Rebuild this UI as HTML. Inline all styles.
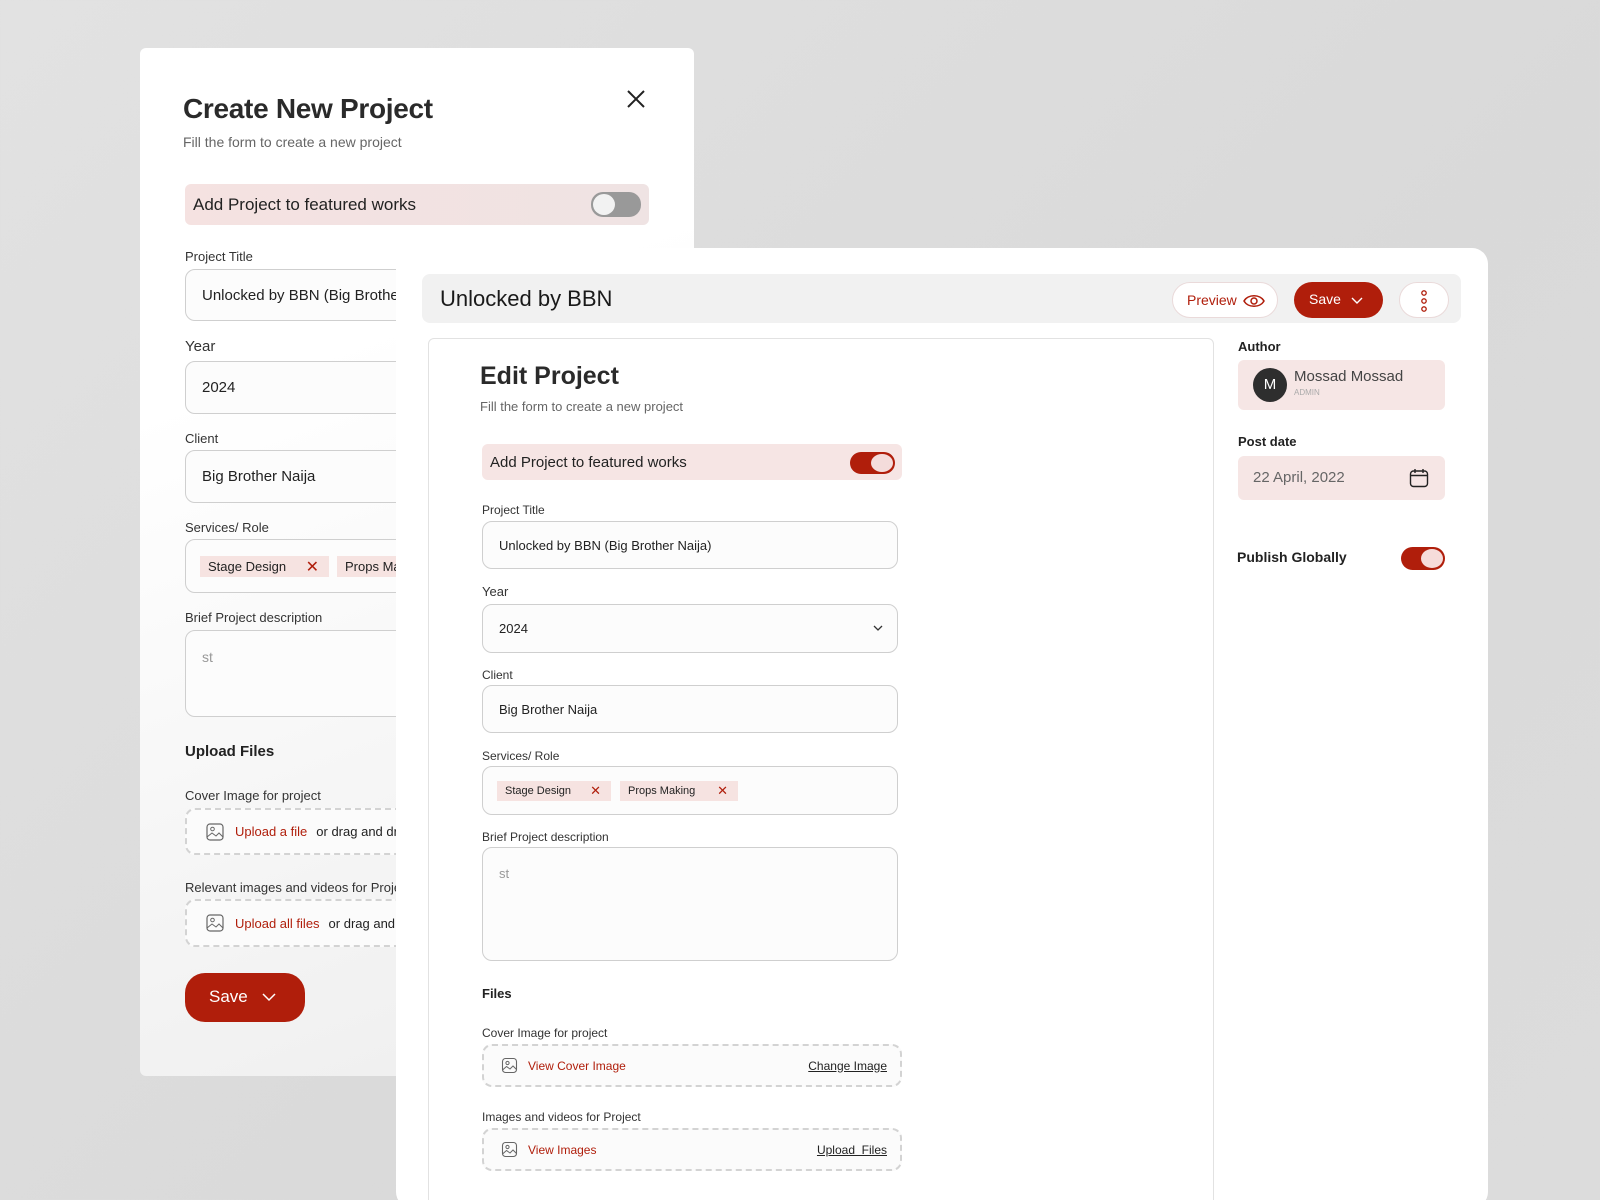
<!DOCTYPE html>
<html style="width:1600px;height:1200px;overflow:hidden"><head><meta charset="utf-8"><style>
*{box-sizing:border-box;margin:0;padding:0}
body{width:1600px;height:1200px;overflow:hidden;background:linear-gradient(135deg,#e2e2e2,#d9d9d9 60%,#dcdcdc);font-family:"Liberation Sans",sans-serif;color:#222;position:relative}
.a{position:absolute;white-space:nowrap}
.back{left:140px;top:48px;width:554px;height:1028px;border-radius:6px;background:linear-gradient(160deg,#fff 30%,#f5f5f5 70%,#eeeeee)}
.lbl{font-size:13px;color:#333}
.inp{border:1px solid #cfcfcf;border-radius:10px;background:#fcfcfc;font-size:14px;color:#222;padding-left:16px;display:flex;align-items:center;overflow:hidden}
.chip{background:#f6e3e1;font-size:12px;color:#222;display:flex;align-items:center;padding-left:8px}
.x{color:#b01e0b;font-size:16px;margin-left:auto;margin-right:10px}
.dash{border:2px dashed #d3d3d3;border-radius:10px;background:#fbfbfb;display:flex;align-items:center;font-size:12px;overflow:hidden}
.red{color:#b01e0b}
.front{left:396px;top:248px;width:1092px;height:960px;border-radius:16px;background:#fff}
.tog{border-radius:12px}
</style></head><body>
<div class="a back"></div>
<div class="a" style="left:183px;top:93px;font-size:28px;font-weight:bold;color:#2a2a2a;letter-spacing:-0.3px">Create New Project</div>
<div class="a" style="left:183px;top:134px;font-size:14px;color:#666">Fill the form to create a new project</div>
<svg class="a" style="left:626px;top:89px" width="20" height="20"><path d="M2 2L18 18M18 2L2 18" stroke="#222" stroke-width="2"/></svg>
<div class="a" style="left:185px;top:184px;width:464px;height:41px;border-radius:6px;background:linear-gradient(90deg,#f5e2e1,#efe3e3);font-size:17px;padding:11px 0 0 8px;color:#222">Add Project to featured works</div>
<div class="a tog" style="left:591px;top:192px;width:50px;height:25px;background:#999"></div>
<div class="a" style="left:593px;top:194px;width:22px;height:21px;border-radius:50%;background:#f2f2f2"></div>
<div class="a lbl" style="left:185px;top:249px">Project Title</div>
<div class="a inp" style="left:185px;top:269px;width:240px;height:52px;font-size:15px">Unlocked by BBN (Big Brother Naija)</div>
<div class="a lbl" style="left:185px;top:338px;font-size:15px">Year</div>
<div class="a inp" style="left:185px;top:361px;width:240px;height:53px;font-size:15px">2024</div>
<div class="a lbl" style="left:185px;top:431px">Client</div>
<div class="a inp" style="left:185px;top:450px;width:240px;height:53px;font-size:15px">Big Brother Naija</div>
<div class="a lbl" style="left:185px;top:520px">Services/ Role</div>
<div class="a inp" style="left:185px;top:539px;width:240px;height:54px"></div>
<div class="a chip" style="left:200px;top:556px;width:129px;height:21px;font-size:13px">Stage Design<span class="x">✕</span></div>
<div class="a chip" style="left:337px;top:556px;width:110px;height:21px;font-size:13px">Props Making</div>
<div class="a lbl" style="left:185px;top:610px">Brief Project description</div>
<div class="a inp" style="left:185px;top:630px;width:240px;height:87px;align-items:flex-start;padding-top:18px;color:#999">st</div>
<div class="a" style="left:185px;top:743px;font-size:15px;font-weight:bold">Upload Files</div>
<div class="a lbl" style="left:185px;top:788px">Cover Image for project</div>
<div class="a dash" style="left:185px;top:808px;width:260px;height:47px;padding-left:18px;font-size:13px"><svg width="20" height="20"><rect x="2" y="2" width="16" height="16" rx="3" fill="none" stroke="#666" stroke-width="1.2"/><circle cx="7.5" cy="7" r="1.8" fill="none" stroke="#666"/><path d="M2 15l5-4 4 3 3-3 4 4" fill="none" stroke="#666"/></svg><span class="red" style="margin-left:10px">Upload a file</span><span style="margin-left:9px">or drag and drop</span></div>
<div class="a lbl" style="left:185px;top:880px">Relevant images and videos for Project</div>
<div class="a dash" style="left:185px;top:899px;width:260px;height:48px;padding-left:18px;font-size:13px"><svg width="20" height="20"><rect x="2" y="2" width="16" height="16" rx="3" fill="none" stroke="#666" stroke-width="1.2"/><circle cx="7.5" cy="7" r="1.8" fill="none" stroke="#666"/><path d="M2 15l5-4 4 3 3-3 4 4" fill="none" stroke="#666"/></svg><span class="red" style="margin-left:10px">Upload all files</span><span style="margin-left:9px">or drag and drop</span></div>
<div class="a" style="left:185px;top:973px;width:120px;height:49px;border-radius:20px;background:#b01e0b;color:#fff;font-size:17px;padding:14px 0 0 24px">Save <svg style="margin-left:10px" width="14" height="10"><path d="M1 2l6 6 6-6" fill="none" stroke="#fff" stroke-width="1.5"/></svg></div>

<div class="a front"></div>
<div class="a" style="left:422px;top:274px;width:1039px;height:49px;border-radius:8px;background:#f1f1f1"></div>
<div class="a" style="left:440px;top:286px;font-size:22px;color:#1a1a1a">Unlocked by BBN</div>
<div class="a" style="left:1172px;top:282px;width:106px;height:36px;border-radius:18px;background:#fff;border:1px solid #eadada;color:#b01e0b;font-size:14px;padding:9px 0 0 14px">Preview<svg style="position:absolute;left:70px;top:9px" width="22" height="18"><path d="M1 9C5 2 17 2 21 9C17 16 5 16 1 9Z" fill="none" stroke="#b01e0b" stroke-width="1.5"/><circle cx="11" cy="9" r="3" fill="none" stroke="#b01e0b" stroke-width="1.5"/></svg></div>
<div class="a" style="left:1294px;top:282px;width:89px;height:36px;border-radius:18px;background:#b01e0b;color:#fff;font-size:14px;padding:9px 0 0 15px">Save<svg style="position:absolute;left:57px;top:14px" width="12" height="9"><path d="M1 2l5 5 5-5" fill="none" stroke="#fff" stroke-width="1.4"/></svg></div>
<div class="a" style="left:1399px;top:282px;width:50px;height:36px;border-radius:18px;background:#fff;border:1px solid #eadada"></div>
<svg class="a" style="left:1418px;top:289px" width="12" height="24"><circle cx="6" cy="4" r="2.2" fill="none" stroke="#b01e0b" stroke-width="1.3"/><circle cx="6" cy="12" r="2.2" fill="none" stroke="#b01e0b" stroke-width="1.3"/><circle cx="6" cy="20" r="2.2" fill="none" stroke="#b01e0b" stroke-width="1.3"/></svg>

<div class="a" style="left:428px;top:338px;width:786px;height:900px;border:1px solid #e2e2e2;border-radius:6px"></div>
<div class="a" style="left:1238px;top:339px;font-size:13px;font-weight:bold;color:#222">Author</div>
<div class="a" style="left:1238px;top:360px;width:207px;height:50px;border-radius:6px;background:#f6e6e5"></div>
<div class="a" style="left:1253px;top:368px;width:34px;height:34px;border-radius:50%;background:#2e2e2e;color:#fff;font-size:15px;text-align:center;line-height:34px">M</div>
<div class="a" style="left:1294px;top:368px;font-size:15px;color:#444">Mossad Mossad</div>
<div class="a" style="left:1294px;top:388px;font-size:8px;color:#aaa">ADMIN</div>
<div class="a" style="left:1238px;top:434px;font-size:13px;font-weight:bold;color:#222">Post date</div>
<div class="a" style="left:1238px;top:456px;width:207px;height:44px;border-radius:6px;background:#f6e6e5;font-size:15px;color:#666;padding:13px 0 0 15px">22 April, 2022</div>
<svg class="a" style="left:1409px;top:468px" width="20" height="20"><rect x="1.5" y="3" width="17" height="15.5" rx="3" fill="none" stroke="#222" stroke-width="1.4"/><path d="M1.5 7.5h17M6 1v4M14 1v4" stroke="#222" stroke-width="1.4"/></svg>
<div class="a" style="left:1237px;top:549px;font-size:14px;font-weight:bold;color:#222">Publish Globally</div>
<div class="a tog" style="left:1401px;top:547px;width:44px;height:23px;background:#b01e0b"></div>
<div class="a" style="left:1421px;top:549px;width:22px;height:19px;border-radius:50%;background:#f6dcda"></div>

<div class="a" style="left:480px;top:362px;font-size:25px;font-weight:bold;color:#2a2a2a">Edit Project</div>
<div class="a" style="left:480px;top:399px;font-size:13px;color:#666">Fill the form to create a new project</div>
<div class="a" style="left:482px;top:444px;width:420px;height:36px;border-radius:6px;background:#f6e5e4;font-size:15px;padding:10px 0 0 8px">Add Project to featured works</div>
<div class="a tog" style="left:850px;top:452px;width:45px;height:22px;background:#b01e0b"></div>
<div class="a" style="left:871px;top:454px;width:22px;height:18px;border-radius:50%;background:#f4dcdb"></div>
<div class="a lbl" style="left:482px;top:503px;font-size:12px">Project Title</div>
<div class="a inp" style="left:482px;top:521px;width:416px;height:48px;font-size:13px">Unlocked by BBN (Big Brother Naija)</div>
<div class="a lbl" style="left:482px;top:584px">Year</div>
<div class="a inp" style="left:482px;top:604px;width:416px;height:49px;font-size:13px">2024<svg style="margin-left:auto;margin-right:14px" width="10" height="7"><path d="M1 1l4 4 4-4" fill="none" stroke="#333" stroke-width="1.3"/></svg></div>
<div class="a lbl" style="left:482px;top:668px;font-size:12px">Client</div>
<div class="a inp" style="left:482px;top:685px;width:416px;height:48px;font-size:13px">Big Brother Naija</div>
<div class="a lbl" style="left:482px;top:749px;font-size:12px">Services/ Role</div>
<div class="a inp" style="left:482px;top:766px;width:416px;height:49px"></div>
<div class="a chip" style="left:497px;top:781px;width:114px;height:20px;font-size:11px">Stage Design<span class="x" style="font-size:13px">✕</span></div>
<div class="a chip" style="left:620px;top:781px;width:118px;height:20px;font-size:11px">Props Making<span class="x" style="font-size:13px">✕</span></div>
<div class="a lbl" style="left:482px;top:830px;font-size:12px">Brief Project description</div>
<div class="a inp" style="left:482px;top:847px;width:416px;height:114px;align-items:flex-start;padding-top:18px;font-size:13px;color:#999">st</div>
<div class="a" style="left:482px;top:986px;font-size:13px;font-weight:bold">Files</div>
<div class="a lbl" style="left:482px;top:1026px;font-size:12px">Cover Image for project</div>
<div class="a dash" style="left:482px;top:1044px;width:420px;height:43px;padding-left:17px"><svg width="17" height="17"><rect x="1.5" y="1.5" width="14" height="14" rx="3" fill="none" stroke="#666" stroke-width="1.1"/><circle cx="6.5" cy="6" r="1.6" fill="none" stroke="#666"/><path d="M1.5 13l4-3.5 3.5 2.5 3-3 3.5 3.5" fill="none" stroke="#666"/></svg><span class="red" style="margin-left:10px">View Cover Image</span><span style="margin-left:auto;margin-right:13px;text-decoration:underline">Change Image</span></div>
<div class="a lbl" style="left:482px;top:1110px;font-size:12px">Images and videos for Project</div>
<div class="a dash" style="left:482px;top:1128px;width:420px;height:43px;padding-left:17px"><svg width="17" height="17"><rect x="1.5" y="1.5" width="14" height="14" rx="3" fill="none" stroke="#666" stroke-width="1.1"/><circle cx="6.5" cy="6" r="1.6" fill="none" stroke="#666"/><path d="M1.5 13l4-3.5 3.5 2.5 3-3 3.5 3.5" fill="none" stroke="#666"/></svg><span class="red" style="margin-left:10px">View Images</span><span style="margin-left:auto;margin-right:13px;text-decoration:underline">Upload&nbsp; Files</span></div>
</body></html>
